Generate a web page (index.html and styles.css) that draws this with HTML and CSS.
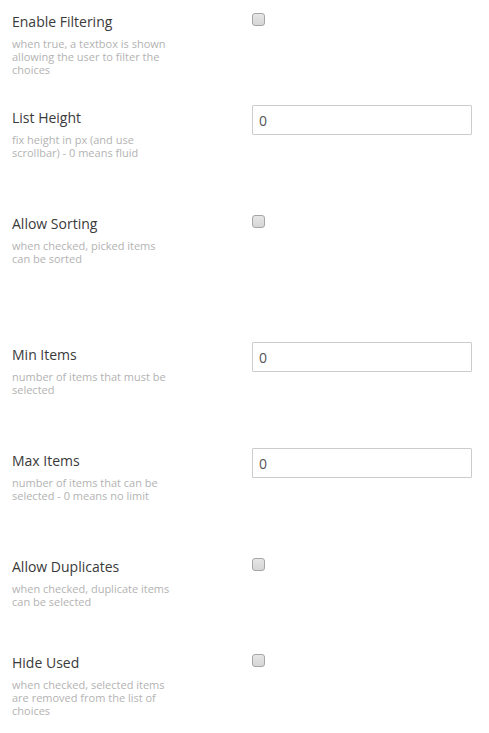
FILE: index.html
```html
<!DOCTYPE html>
<html>
<head>
<meta charset="utf-8">
<link rel="stylesheet" href="styles.css">
</head>
<body>
<div class="form">
  <div class="row row-check">
    <div class="label-col">
      <div class="label">Enable Filtering</div>
      <div class="desc">when true, a textbox is shown allowing the user to filter the choices</div>
    </div>
    <div class="editor"><span class="checkbox"></span></div>
  </div>
  <div class="row row-input">
    <div class="label-col">
      <div class="label">List Height</div>
      <div class="desc">fix height in px (and use scrollbar) - 0 means fluid</div>
    </div>
    <div class="editor"><input class="textbox" type="text" value="0"></div>
  </div>
  <div class="row row-tall">
    <div class="label-col">
      <div class="label">Allow Sorting</div>
      <div class="desc">when checked, picked items can be sorted</div>
    </div>
    <div class="editor"><span class="checkbox"></span></div>
  </div>
  <div class="row row-input">
    <div class="label-col">
      <div class="label">Min Items</div>
      <div class="desc">number of items that must be selected</div>
    </div>
    <div class="editor"><input class="textbox" type="text" value="0"></div>
  </div>
  <div class="row row-input">
    <div class="label-col">
      <div class="label">Max Items</div>
      <div class="desc">number of items that can be selected - 0 means no limit</div>
    </div>
    <div class="editor"><input class="textbox" type="text" value="0"></div>
  </div>
  <div class="row row-check">
    <div class="label-col">
      <div class="label">Allow Duplicates</div>
      <div class="desc">when checked, duplicate items can be selected</div>
    </div>
    <div class="editor"><span class="checkbox"></span></div>
  </div>
  <div class="row">
    <div class="label-col">
      <div class="label">Hide Used</div>
      <div class="desc">when checked, selected items are removed from the list of choices</div>
    </div>
    <div class="editor"><span class="checkbox"></span></div>
  </div>
</div>
</body>
</html>
```
FILE: styles.css
```css
html, body {
  margin: 0;
  padding: 0;
  background: #ffffff;
}
body {
  font-family: "Open Sans", "Liberation Sans", sans-serif;
}
.form {
  display: flex;
  flex-direction: column;
  padding: 11px 0 0 12px;
}
.row {
  display: flex;
  align-items: flex-start;
}
.row-check { height: 96px; }
.row-input { height: 106px; }
.row-tall { height: 131px; }
.label-col {
  width: 240px;
  flex: none;
}
.label {
  padding-top: 1px;
  font-size: 14px;
  line-height: 20px;
  color: #3a3a3a;
}
.desc {
  margin-top: 5px;
  font-size: 11px;
  line-height: 13px;
  color: #b3b3b3;
  width: 160px;
}
.editor {
  display: flex;
}
.checkbox {
  display: block;
  box-sizing: border-box;
  width: 13px;
  height: 13px;
  margin-top: 2px;
  border: 1px solid #a6a6a6;
  border-radius: 3px;
  background: linear-gradient(#e6e6e6, #d6d6d6);
}
.textbox {
  box-sizing: border-box;
  width: 220px;
  height: 30px;
  margin: -2px 0 0 0;
  padding: 0 6px;
  border: 1px solid #cccccc;
  border-radius: 1px;
  font-family: "Open Sans", "Liberation Sans", sans-serif;
  font-size: 14px;
  color: #555555;
  background: #ffffff;
  outline: none;
}
```
